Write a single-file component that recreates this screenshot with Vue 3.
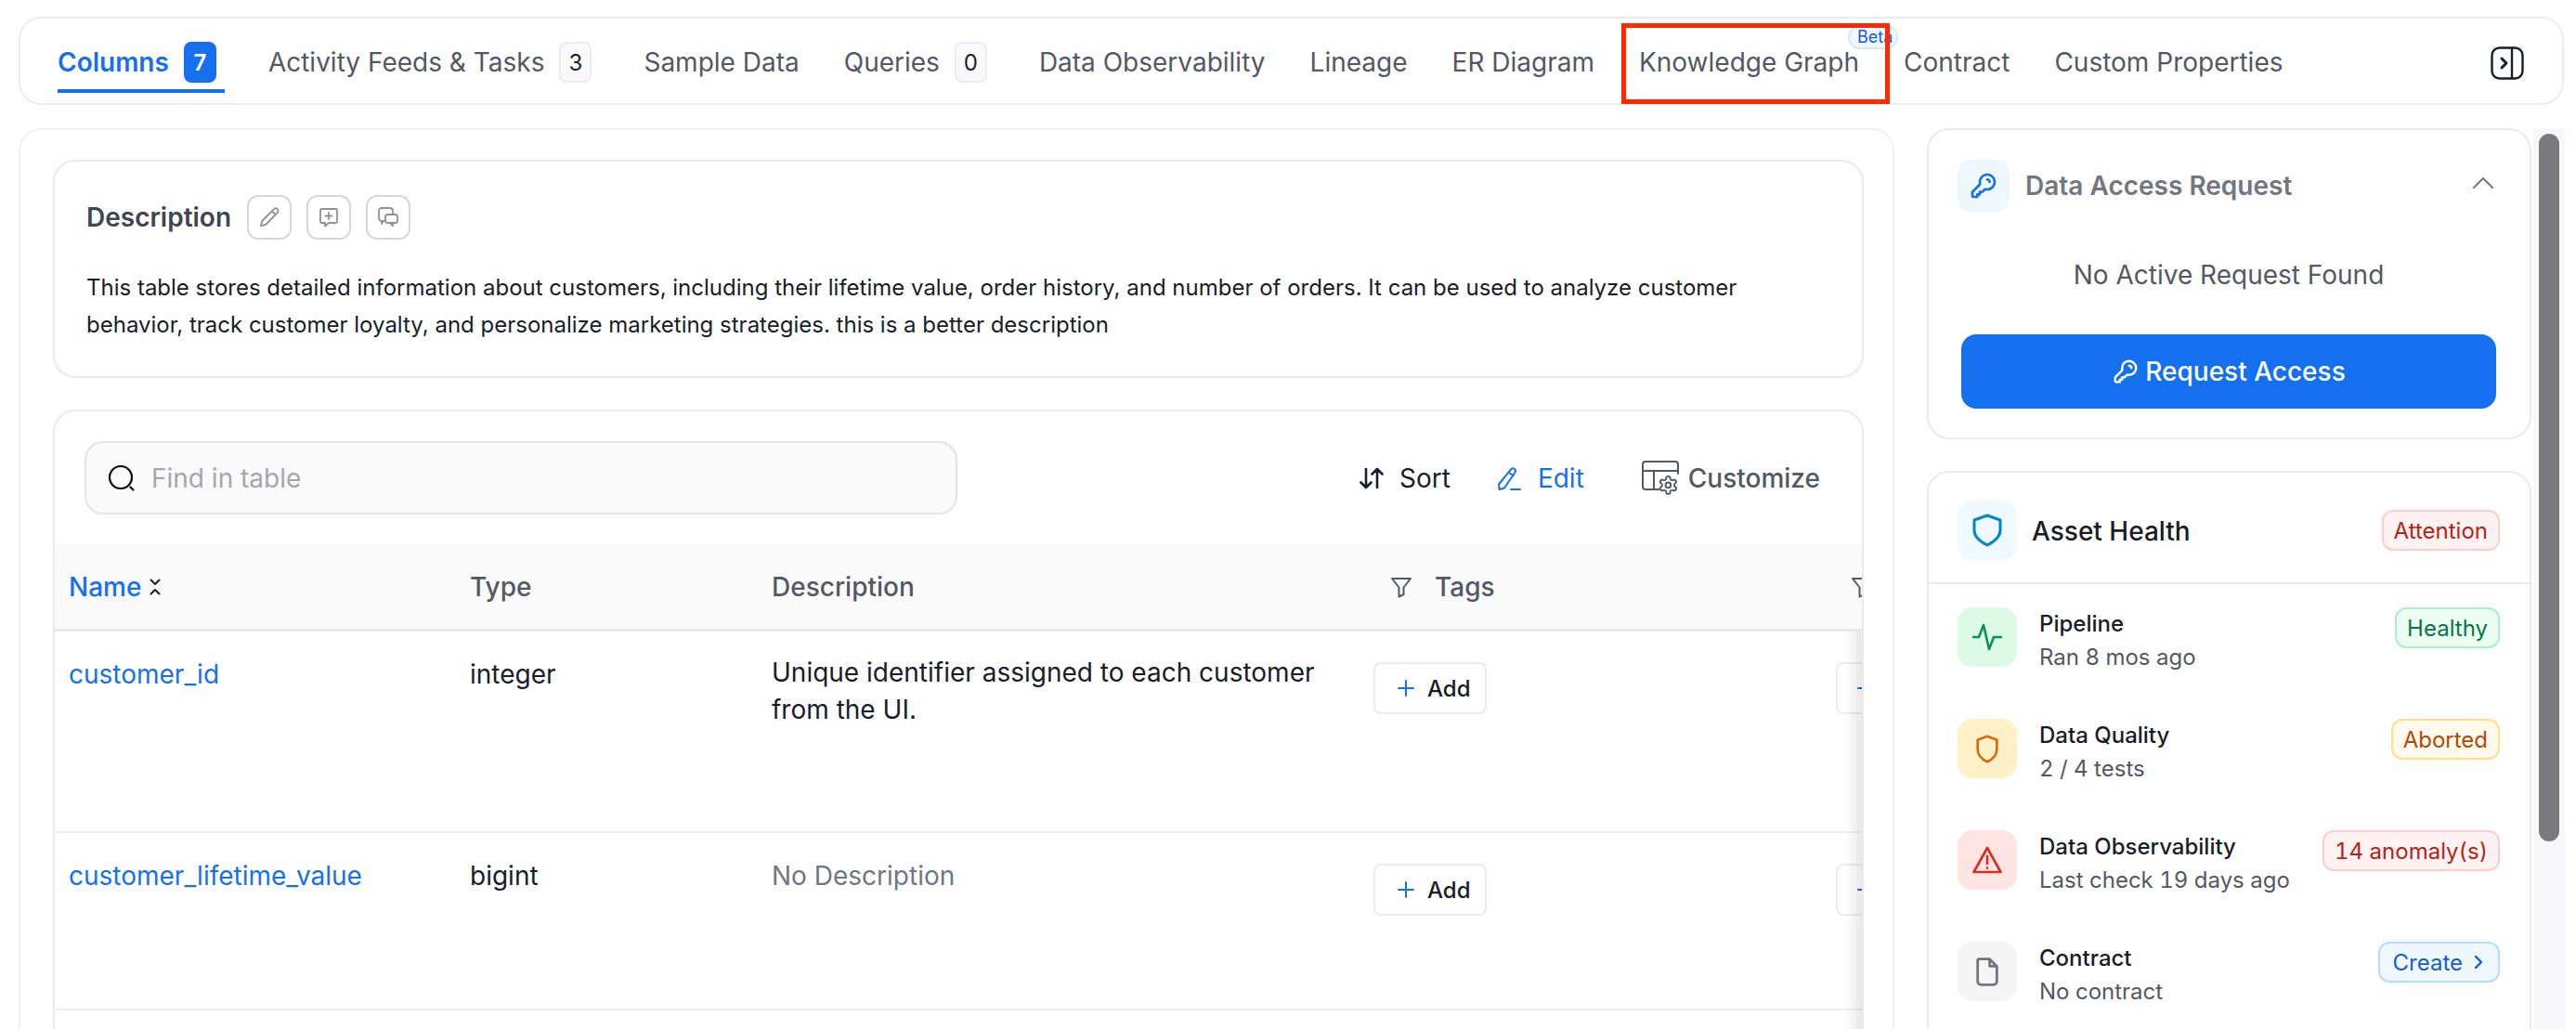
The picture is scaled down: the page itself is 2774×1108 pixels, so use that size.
<template>
  <div class="page">
    <!-- Tabs -->
    <div class="tabs">
      <div
        v-for="tab in tabs"
        :key="tab.label"
        class="tab"
        :class="{ active: tab.active, counted: tab.count !== undefined }"
      >
        <span>{{ tab.label }}</span>
        <span v-if="tab.count !== undefined" class="tab-count">{{ tab.count }}</span>
        <span v-if="tab.beta" class="beta">Beta</span>
        <span v-if="tab.beta" class="highlight"></span>
      </div>
      <svg class="panel-toggle" viewBox="0 0 36 36" fill="none" stroke="#181d27" stroke-width="2.4">
        <rect x="1.5" y="1.5" width="33" height="33" rx="8" />
        <path d="M23 1.5v33" />
        <path d="M12 13l5 5-5 5" stroke-width="3" stroke-linecap="round" stroke-linejoin="round" />
      </svg>
    </div>

    <div class="content">
      <div class="main-card">
        <!-- Description -->
        <section class="desc-card">
          <div class="desc-head">
            <h3>Description</h3>
            <button class="icon-btn">
              <svg viewBox="0 0 24 24" fill="none" stroke="#8f9099" stroke-width="1.8" stroke-linejoin="round">
                <path d="M17 3.2a2.6 2.6 0 0 1 3.8 3.6L8 20l-5 1.2L4.200 16z" />
                <path d="M15 5.500l3.600 3.500" />
              </svg>
            </button>
            <button class="icon-btn">
              <svg viewBox="0 0 24 24" fill="none" stroke="#8f9099" stroke-width="1.8" stroke-linejoin="round" stroke-linecap="round">
                <path d="M4.500 3h15a1.500 1.500 0 0 1 1.500 1.500v12a1.500 1.500 0 0 1-1.500 1.500H12l-4 3.500V18H4.500A1.500 1.500 0 0 1 3 16.500v-12A1.500 1.500 0 0 1 4.500 3z" />
                <path d="M12 7v7M8.500 10.500h7" />
              </svg>
            </button>
            <button class="icon-btn">
              <svg viewBox="0 0 24 24" fill="none" stroke="#8f9099" stroke-width="1.8" stroke-linejoin="round" stroke-linecap="round">
                <path d="M8 16H6.500L5 19v-3.200A3 3 0 0 1 2 13V5a3 3 0 0 1 3-3h9a3 3 0 0 1 3 3v3" />
                <rect x="9" y="9" width="13" height="9" rx="2.500" />
                <path d="M17 18v3l-3-3" />
              </svg>
            </button>
          </div>
          <p class="desc-text">
            This table stores detailed information about customers, including their lifetime value, order history, and number of orders. It can be used to analyze customer behavior, track customer loyalty, and personalize marketing strategies. this is a better description
          </p>
        </section>

        <!-- Schema table -->
        <section class="table-card">
          <div class="toolbar">
            <div class="search">
              <svg viewBox="0 0 30 30" fill="none" stroke="#0a0a0a" stroke-width="2.200" stroke-linecap="round">
                <circle cx="14" cy="14" r="12" />
                <path d="M24.500 24.500l3 3" />
              </svg>
              <span>Find in table</span>
            </div>
            <div class="actions">
              <div class="action sort">
                <svg viewBox="0 0 28 28" fill="none" stroke="#181d27" stroke-width="2.600" stroke-linecap="round" stroke-linejoin="round">
                  <path d="M8 4v20M2.500 18.500L8 24l5.500-5.500M20 24V4M14.500 9.500L20 4l5.500 5.500" />
                </svg>
                <span>Sort</span>
              </div>
              <div class="action edit">
                <svg viewBox="0 0 26 28" fill="none" stroke="#1570ef" stroke-width="2" stroke-linecap="round" stroke-linejoin="round">
                  <path d="M15 4.500a2.800 2.800 0 0 1 4.800 2.800L8 24.500l-5.500 1.500-.500-5.500z" />
                  <path d="M13 8l4.500 3M15 26h10" />
                </svg>
                <span>Edit</span>
              </div>
              <div class="action customize">
                <svg viewBox="0 0 40 38" fill="none" stroke="#535862" stroke-width="2" stroke-linecap="round" stroke-linejoin="round">
                  <path d="M18 31H4a3 3 0 0 1-3-3V4a3 3 0 0 1 3-3h32a3 3 0 0 1 3 3v10" />
                  <path d="M1 11h38M13 11v20" />
                  <g transform="translate(17 15) scale(0.95)">
                    <path d="M12.220 2h-.44a2 2 0 0 0-2 2v.18a2 2 0 0 1-1 1.730l-.43.25a2 2 0 0 1-2 0l-.15-.08a2 2 0 0 0-2.730.73l-.22.38a2 2 0 0 0 .73 2.730l.15.1a2 2 0 0 1 1 1.720v.51a2 2 0 0 1-1 1.740l-.15.09a2 2 0 0 0-.73 2.730l.22.38a2 2 0 0 0 2.730.73l.15-.08a2 2 0 0 1 2 0l.43.25a2 2 0 0 1 1 1.730V20a2 2 0 0 0 2 2h.44a2 2 0 0 0 2-2v-.18a2 2 0 0 1 1-1.730l.43-.25a2 2 0 0 1 2 0l.15.08a2 2 0 0 0 2.730-.73l.22-.39a2 2 0 0 0-.73-2.730l-.15-.08a2 2 0 0 1-1-1.740v-.5a2 2 0 0 1 1-1.740l.15-.09a2 2 0 0 0 .73-2.730l-.22-.38a2 2 0 0 0-2.730-.73l-.15.08a2 2 0 0 1-2 0l-.43-.25a2 2 0 0 1-1-1.730V4a2 2 0 0 0-2-2z" />
                    <circle cx="12" cy="12" r="3" />
                  </g>
                </svg>
                <span>Customize</span>
              </div>
            </div>
          </div>

          <div class="grid-head">
            <div class="name-head">
              Name
              <svg viewBox="0 0 14 20" fill="none" stroke="#181d27" stroke-width="2" stroke-linecap="round" stroke-linejoin="round">
                <path d="M2.500 2.500L7 7l4.500-4.500M2.500 17.500L7 13l4.500 4.500" />
              </svg>
            </div>
            <div>Type</div>
            <div>Description</div>
            <div class="filter-head">
              <svg viewBox="0 0 24 24" fill="none" stroke="#535862" stroke-width="2" stroke-linejoin="round">
                <path d="M2 3h20l-7.500 9.500V20l-5 2.500v-10z" />
              </svg>
              Tags
            </div>
            <div class="filter-head last">
              <svg viewBox="0 0 24 24" fill="none" stroke="#535862" stroke-width="2" stroke-linejoin="round">
                <path d="M2 3h20l-7.500 9.500V20l-5 2.500v-10z" />
              </svg>
            </div>
          </div>

          <div class="grid-body">
            <div
              v-for="row in rows"
              :key="row.name"
              class="grid-row"
              :style="{ height: row.height + 'px' }"
            >
              <a class="col-name">{{ row.name }}</a>
              <div class="col-type">{{ row.type }}</div>
              <div class="col-desc" :class="{ empty: !row.desc }">{{ row.desc || 'No Description' }}</div>
              <div class="col-add">
                <button class="add-btn">
                  <svg viewBox="0 0 18 18" fill="none" stroke="#1570ef" stroke-width="2" stroke-linecap="round">
                    <path d="M9 1v16M1 9h16" />
                  </svg>
                  Add
                </button>
              </div>
              <div class="col-add">
                <!-- the label of this one is past the clipped edge of the table -->
                <button class="add-btn clipped">
                  <svg viewBox="0 0 18 18" fill="none" stroke="#1570ef" stroke-width="2" stroke-linecap="round">
                    <path d="M9 1v16M1 9h16" />
                  </svg>
                </button>
              </div>
            </div>
            <div class="fixed-shadow"></div>
          </div>
        </section>
      </div>

      <aside class="side">
        <!-- Data access -->
        <section class="access-card">
          <div class="access-head">
            <span class="access-icon">
              <svg viewBox="0 0 24 24" fill="none" stroke="#1570ef" stroke-width="2" stroke-linecap="round" stroke-linejoin="round">
                <path d="M17 9c0-.5-.2-1-.6-1.400C16 7.200 15.500 7 15 7M15 15a6 6 0 1 0-5.950-5.200c.06.44.09.66.07.8-.02.14-.05.22-.12.34-.07.12-.19.24-.42.48l-5.110 5.110c-.17.17-.26.26-.32.36-.05.09-.1.19-.12.29-.03.12-.03.24-.03.48V19.400c0 .56 0 .84.11 1.050.1.190.25.340.44.440.21.110.49.110 1.050.110H7v-2h2v-2h2l1.580-1.580c.24-.24.36-.36.48-.43.13-.07.2-.1.35-.12.14-.02.35.01.78.07.27.04.54.05.81.05z" />
              </svg>
            </span>
            <span class="access-title">Data Access Request</span>
            <svg class="chevron" viewBox="0 0 24 14" fill="none" stroke="#717680" stroke-width="2" stroke-linecap="round" stroke-linejoin="round">
              <path d="M2 12L12 2l10 10" />
            </svg>
          </div>
          <p class="no-request">No Active Request Found</p>
          <button class="request-btn">
            <svg viewBox="0 0 24 24" fill="none" stroke="#fff" stroke-width="2" stroke-linecap="round" stroke-linejoin="round">
              <path d="M17 9c0-.5-.2-1-.6-1.400C16 7.200 15.500 7 15 7M15 15a6 6 0 1 0-5.950-5.200c.06.44.09.66.07.8-.02.14-.05.22-.12.34-.07.12-.19.24-.42.48l-5.110 5.110c-.17.17-.26.26-.32.36-.05.09-.1.19-.12.29-.03.12-.03.24-.03.48V19.400c0 .56 0 .84.11 1.050.1.190.25.340.44.440.21.110.49.110 1.050.110H7v-2h2v-2h2l1.580-1.580c.24-.24.36-.36.48-.43.13-.07.2-.1.35-.12.14-.02.35.01.78.07.27.04.54.05.81.05z" />
            </svg>
            Request Access
          </button>
        </section>

        <!-- Asset health -->
        <section class="health-card">
          <div class="health-head">
            <span class="tile blue">
              <svg viewBox="0 0 32 36" fill="none" stroke="#0086c9" stroke-width="3" stroke-linejoin="round">
                <path d="M16 2l14 5v11c0 7-6 12-14 16C8 30 2 25 2 18V7z" />
              </svg>
            </span>
            <span class="health-title">Asset Health</span>
            <span class="pill red">Attention</span>
          </div>
          <div class="health-rows">
            <div v-for="item in health" :key="item.title" class="health-row">
              <span class="tile" :class="item.tone">
                <svg v-if="item.icon === 'pulse'" viewBox="0 0 32 32" fill="none" stroke="#079455" stroke-width="2.600" stroke-linecap="round" stroke-linejoin="round">
                  <path d="M1 16h6l5-13 6 26 5-13h8" />
                </svg>
                <svg v-else-if="item.icon === 'shield'" class="sm" viewBox="0 0 32 36" fill="none" stroke="#dc6803" stroke-width="3" stroke-linejoin="round">
                  <path d="M16 2l12 4.500v12c0 7-5 12-12 15.500C9 30.500 4 25.500 4 18.500v-12z" />
                </svg>
                <svg v-else-if="item.icon === 'alert'" viewBox="0 0 32 32" fill="none" stroke="#d92d20" stroke-width="2.600" stroke-linecap="round" stroke-linejoin="round">
                  <path d="M16 3L1.500 29h29z" />
                  <path d="M16 12v8M16 24.500v.2" />
                </svg>
                <svg v-else class="sm" viewBox="0 0 28 36" fill="none" stroke="#717680" stroke-width="3.200" stroke-linejoin="round">
                  <path d="M4 2h13l9 9v19a4 4 0 0 1-4 4H6a4 4 0 0 1-4-4V4a2 2 0 0 1 2-2z" />
                  <path d="M17 2v9h9" />
                </svg>
              </span>
              <div class="health-text">
                <div class="health-name">{{ item.title }}</div>
                <div class="health-sub">{{ item.sub }}</div>
              </div>
              <span class="pill" :class="item.pillTone">
                {{ item.pill }}
                <svg v-if="item.arrow" viewBox="0 0 10 16" fill="none" stroke="#175cd3" stroke-width="2.400" stroke-linecap="round" stroke-linejoin="round">
                  <path d="M2 2l6 6-6 6" />
                </svg>
              </span>
            </div>
          </div>
        </section>
      </aside>

      <div class="scroll-track">
        <div class="scroll-thumb"></div>
      </div>
    </div>
  </div>
</template>

<script setup>
const tabs = [
  { label: 'Columns', count: 7, active: true },
  { label: 'Activity Feeds & Tasks', count: 3 },
  { label: 'Sample Data' },
  { label: 'Queries', count: 0 },
  { label: 'Data Observability' },
  { label: 'Lineage' },
  { label: 'ER Diagram' },
  { label: 'Knowledge Graph', beta: true },
  { label: 'Contract' },
  { label: 'Custom Properties' }
]

const rows = [
  { name: 'customer_id', type: 'integer', desc: 'Unique identifier assigned to each customer from the UI.', height: 217 },
  { name: 'customer_lifetime_value', type: 'bigint', desc: '', height: 191 }
]

const health = [
  { title: 'Pipeline', sub: 'Ran 8 mos ago', pill: 'Healthy', pillTone: 'green', tone: 'green', icon: 'pulse' },
  { title: 'Data Quality', sub: '2 / 4 tests', pill: 'Aborted', pillTone: 'amber', tone: 'amber', icon: 'shield' },
  { title: 'Data Observability', sub: 'Last check 19 days ago', pill: '14 anomaly(s)', pillTone: 'red', tone: 'red', icon: 'alert' },
  { title: 'Contract', sub: 'No contract', pill: 'Create', pillTone: 'blue', tone: 'gray', icon: 'doc', arrow: true }
]
</script>

<style>
html, body { background: #fff; overflow: hidden; }
</style>

<style scoped>
.page {
  width: 2774px;
  height: 1108px;
  padding: 18px 13px 0 20px;
  box-sizing: border-box;
  overflow: hidden;
  background: #fff;
  font-family: Inter, "Liberation Sans", sans-serif;
  font-size: 28px;
  color: #181d27;
}

.tabs {
  display: flex;
  align-items: flex-start;
  gap: 48px;
  height: 95px;
  box-sizing: border-box;
  padding: 25px 0 0 40px;
  border: 2px solid #eaecf5;
  border-radius: 24px;
  position: relative;
}
.tab {
  display: flex;
  align-items: center;
  height: 44px;
  color: #535862;
  white-space: nowrap;
  position: relative;
}
.tab.counted { padding-right: 8px; }
.tab.active { color: #1570ef; font-weight: 600; }
.tab.active::after {
  content: '';
  position: absolute;
  left: 0;
  right: -1px;
  top: 51px;
  height: 4px;
  background: #1570ef;
}
.tab-count {
  display: flex;
  align-items: center;
  justify-content: center;
  width: 35px;
  height: 44px;
  box-sizing: border-box;
  margin-left: 16px;
  border: 2px solid #eaecf5;
  border-radius: 8px;
  background: #f9f9fb;
  color: #181d27;
  font-size: 24px;
  font-weight: 400;
}
.tab.active .tab-count {
  background: #1570ef;
  border-color: #1570ef;
  color: #fff;
  font-weight: 600;
}
.beta {
  position: absolute;
  left: 225px;
  top: -18px;
  width: 54px;
  height: 26px;
  box-sizing: border-box;
  padding-left: 8px;
  border: 2px solid #d1e9ff;
  border-radius: 13px;
  background: #eff8ff;
  color: #175cd3;
  font-size: 18px;
  line-height: 22px;
  text-align: left;
}
.highlight {
  position: absolute;
  left: -19px;
  top: -20px;
  width: 289px;
  height: 87px;
  box-sizing: border-box;
  border: 5px solid #ff2a00;
}
.panel-toggle {
  position: absolute;
  right: 41px;
  top: 30px;
  width: 36px;
  height: 36px;
}

.content {
  display: flex;
  align-items: flex-start;
  margin-top: 25px;
}

.main-card {
  width: 2020px;
  height: 1000px;
  flex-shrink: 0;
  box-sizing: border-box;
  padding: 32px 31px 0 35px;
  border: 2px solid #eef0f5;
  border-radius: 24px;
}

.desc-card {
  height: 235px;
  box-sizing: border-box;
  padding: 36px 36px 0 34px;
  border: 2px solid #eaeaea;
  border-radius: 24px;
}
.desc-head {
  display: flex;
  align-items: center;
  gap: 16px;
}
.desc-head h3 {
  margin: 0 1px 0 0;
  font-size: 28px;
  font-weight: 600;
  color: #414651;
  line-height: 48px;
}
.icon-btn {
  display: flex;
  align-items: center;
  justify-content: center;
  width: 48px;
  height: 48px;
  padding: 0;
  background: #fff;
  border: 2px solid #d5d7da;
  border-radius: 12px;
}
.icon-btn svg { width: 24px; height: 24px; }
.desc-text {
  margin: 32px 0 0;
  font-size: 24px;
  line-height: 40px;
  color: #181d27;
}

.table-card {
  height: 800px;
  margin-top: 34px;
  box-sizing: border-box;
  border: 2px solid #eaeaea;
  border-radius: 24px;
  overflow: hidden;
}
.toolbar {
  display: flex;
  align-items: center;
  justify-content: space-between;
  height: 143px;
  box-sizing: border-box;
  padding: 0 45px 0 32px;
}
.search {
  display: flex;
  align-items: center;
  gap: 17px;
  width: 940px;
  height: 79px;
  box-sizing: border-box;
  padding-left: 23px;
  background: #fafafa;
  border: 2px solid #e4e4e4;
  border-radius: 20px;
  color: #a4a7ae;
}
.search svg { width: 30px; height: 30px; }
.actions { display: flex; align-items: center; }
.action {
  display: flex;
  align-items: center;
  font-weight: 500;
}
.sort { gap: 16px; margin-right: 50px; font-weight: 400; }
.sort svg { width: 28px; height: 28px; }
.edit { gap: 18px; margin-right: 62px; color: #1570ef; font-weight: 400; }
.edit svg { width: 26px; height: 28px; }
.customize { gap: 10px; color: #535862; }
.customize svg { width: 40px; height: 38px; }

.grid-head,
.grid-row {
  display: grid;
  grid-template-columns: 433px 325px 648px 498px 200px;
}
.grid-head {
  align-items: center;
  height: 94px;
  box-sizing: border-box;
  background: #fafafa;
  border-bottom: 3px solid #eaeaea;
  color: #535862;
  font-weight: 500;
}
.grid-head > div:first-child { padding-left: 15px; }
.grid-head > div:nth-child(2),
.grid-head > div:nth-child(3) { padding-left: 14px; }
.name-head {
  display: flex;
  align-items: center;
  gap: 8px;
  color: #1570ef;
}
.name-head svg { width: 14px; height: 20px; }
.filter-head {
  display: flex;
  align-items: center;
  gap: 24px;
  padding-left: 32px;
}
.filter-head.last { padding-left: 30px; }
.filter-head svg { width: 24px; height: 24px; }

.grid-body { position: relative; min-height: 600px; }
.grid-row {
  box-sizing: border-box;
  border-bottom: 2px solid #f0f0f0;
  padding-top: 30px;
}
.grid-row > * { padding-left: 14px; line-height: 40px; }
.grid-row > .col-name { padding-left: 15px; }
.col-name { color: #1570ef; margin-top: -4px; }
.col-type { color: #181d27; margin-top: -4px; }
.col-desc { color: #181d27; padding-right: 40px; margin-top: -6px; }
.col-desc.empty { color: #717680; margin-top: -4px; }
.col-add { margin-top: 3px; }
.add-btn {
  display: flex;
  align-items: center;
  gap: 14px;
  width: 122px;
  height: 56px;
  padding: 0 0 0 24px;
  box-sizing: border-box;
  background: #fff;
  border: 2px solid #eaecf5;
  border-radius: 8px;
  font: 500 24px Inter, "Liberation Sans", sans-serif;
  color: #181d27;
}
.add-btn.clipped { padding-left: 21px; }
.add-btn svg { width: 18px; height: 18px; flex-shrink: 0; }
.fixed-shadow {
  position: absolute;
  top: 0;
  right: 0;
  bottom: 0;
  width: 18px;
  background: linear-gradient(to right, rgba(0, 0, 0, 0), rgba(0, 0, 0, 0.09));
}

.side {
  display: flex;
  flex-direction: column;
  gap: 34px;
  width: 651px;
  margin-left: 35px;
  flex-shrink: 0;
}
.access-card {
  height: 335px;
  box-sizing: border-box;
  padding: 32px 36px 0 31px;
  border: 2px solid #eaeaea;
  border-radius: 24px;
}
.access-head {
  display: flex;
  align-items: center;
  gap: 17px;
  height: 56px;
}
.access-icon {
  display: flex;
  align-items: center;
  justify-content: center;
  width: 56px;
  height: 56px;
  background: #eff8ff;
  border-radius: 14px;
}
.access-icon svg { width: 32px; height: 32px; }
.access-title {
  flex: 1;
  font-weight: 600;
  color: #717680;
}
.chevron { width: 24px; height: 14px; margin: -6px 2px 0 0; }
.no-request {
  margin: 48px 0 0 4px;
  text-align: center;
  line-height: 40px;
  color: #535862;
}
.request-btn {
  display: flex;
  align-items: center;
  justify-content: center;
  gap: 6px;
  width: 576px;
  height: 80px;
  margin: 44px 0 0 4px;
  padding: 0;
  background: #1570ef;
  border: none;
  border-radius: 16px;
  color: #fff;
  font: 500 28px Inter, "Liberation Sans", sans-serif;
}
.request-btn svg { width: 30px; height: 30px; }

.health-card {
  height: 640px;
  box-sizing: border-box;
  border: 2px solid #eaeaea;
  border-radius: 24px;
}
.health-head {
  display: flex;
  align-items: center;
  height: 120px;
  box-sizing: border-box;
  padding: 6px 32px 0 31px;
  border-bottom: 2px solid #eaeaea;
}
.tile {
  display: flex;
  align-items: center;
  justify-content: center;
  width: 64px;
  height: 64px;
  flex-shrink: 0;
  border-radius: 16px;
}
.tile svg { width: 32px; height: 36px; }
.tile svg.sm { width: 28px; height: 31px; }
.tile.blue { background: #f0f9ff; }
.tile.green { background: #dcfae6; }
.tile.amber { background: #fef0c7; }
.tile.red { background: #fee4e2; }
.tile.gray { background: #f5f5f5; }
.health-title {
  flex: 1;
  margin: 2px 0 0 16px;
  font-weight: 500;
}
.pill {
  display: inline-flex;
  align-items: center;
  gap: 12px;
  height: 44px;
  padding: 0 11px;
  box-sizing: border-box;
  border: 2px solid;
  border-radius: 12px;
  font-size: 24px;
  font-variant-numeric: tabular-nums;
  white-space: nowrap;
}
.pill svg { width: 10px; height: 16px; }
.pill.red { background: #fef3f2; border-color: #fecdca; color: #b42318; }
.pill.green { background: #ecfdf3; border-color: #abefc6; color: #067647; }
.pill.amber { background: #fffaeb; border-color: #fedf89; color: #b54708; }
.pill.blue {
  padding: 0 16px 0 14px;
  background: #eff8ff;
  border-color: #b2ddff;
  color: #175cd3;
}
.health-rows {
  display: flex;
  flex-direction: column;
  gap: 48px;
  padding: 25px 32px 0 31px;
}
.health-row {
  display: flex;
  align-items: flex-start;
}
.health-text { flex: 1; margin-left: 24px; }
.health-name { font-size: 24px; font-weight: 500; line-height: 36px; }
.health-sub {
  font-size: 24px;
  line-height: 36px;
  color: #535862;
  font-variant-numeric: tabular-nums;
}

.scroll-track {
  width: 34px;
  height: 1000px;
  margin-left: 2px;
  flex-shrink: 0;
  background: #f8f8fc;
  padding: 6px 6px 0;
  box-sizing: border-box;
}
.scroll-thumb {
  width: 22px;
  height: 762px;
  background: #7a7a7c;
  border-radius: 11px;
}
</style>
